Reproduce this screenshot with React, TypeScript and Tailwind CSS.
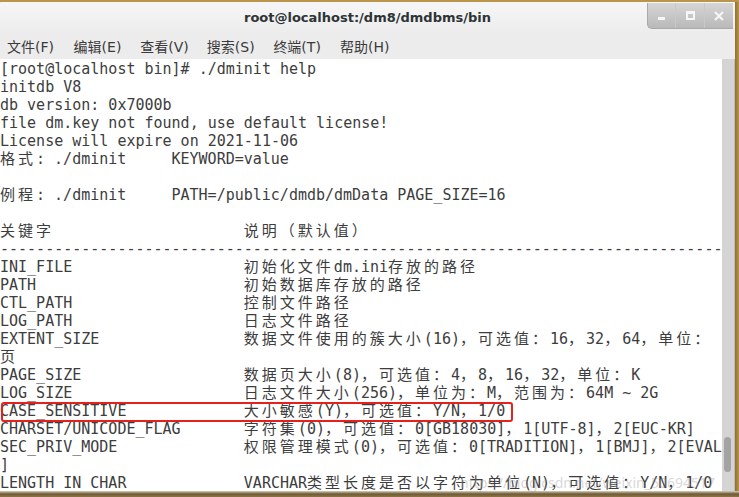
const KEY_COLS = 27;

const cellWidth = (s: string) => {
  let n = 0;
  for (const ch of s) n += ch.charCodeAt(0) > 0x7f ? 2 : 1;
  return n;
};

const row = (key: string, desc: string) =>
  key + ' '.repeat(Math.max(1, KEY_COLS - cellWidth(key))) + desc;

const lines: string[] = [
  '[root@localhost bin]# ./dminit help',
  'initdb V8',
  'db version: 0x7000b',
  'file dm.key not found, use default license!',
  'License will expire on 2021-11-06',
  '格式: ./dminit     KEYWORD=value',
  '',
  '例程: ./dminit     PATH=/public/dmdb/dmData PAGE_SIZE=16',
  '',
  row('关键字', '说明（默认值）'),
  '-'.repeat(80),
  row('INI_FILE', '初始化文件dm.ini存放的路径'),
  row('PATH', '初始数据库存放的路径'),
  row('CTL_PATH', '控制文件路径'),
  row('LOG_PATH', '日志文件路径'),
  row('EXTENT_SIZE', '数据文件使用的簇大小(16)，可选值：16，32，64，单位：'),
  '页',
  row('PAGE_SIZE', '数据页大小(8)，可选值：4，8，16，32，单位：K'),
  row('LOG_SIZE', '日志文件大小(256)，单位为：M，范围为：64M ~ 2G'),
  row('CASE_SENSITIVE', '大小敏感(Y)，可选值：Y/N，1/0'),
  row('CHARSET/UNICODE_FLAG', '字符集(0)，可选值：0[GB18030]，1[UTF-8]，2[EUC-KR]'),
  row('SEC_PRIV_MODE', '权限管理模式(0)，可选值：0[TRADITION]，1[BMJ]，2[EVAL'),
  ']',
  row('LENGTH_IN_CHAR', 'VARCHAR类型长度是否以字符为单位(N)，可选值：Y/N，1/0'),
];

const menus = ['文件(F)', '编辑(E)', '查看(V)', '搜索(S)', '终端(T)', '帮助(H)'];

function TermLine({ text }: { text: string }) {
  const runs = text.match(/[\x00-\x7f]+|[^\x00-\x7f]+/g) ?? [];
  return (
    <div className="h-[18px] leading-[18px] whitespace-pre">
      {runs.map((r, i) =>
        /^[\x00-\x7f]/.test(r) ? (
          <span key={i}>{r}</span>
        ) : (
          <span key={i} className="tracking-[3px]">
            {r}
          </span>
        )
      )}
    </div>
  );
}

function WindowButtons() {
  return (
    <div className="flex h-[26px] mt-[1px] rounded-bl-[5px] border-l border-b border-[#a9a9a9] bg-gradient-to-b from-[#d6d6d6] to-[#b9b9b9] overflow-hidden">
      <div className="w-[28px] flex items-center justify-center border-r border-[#c9c9c9]">
        <div className="w-[7px] h-[3px] mt-[6px] bg-[#f6f6f6]" />
      </div>
      <div className="w-[29px] flex items-center justify-center border-r border-[#c9c9c9]">
        <div className="w-[9px] h-[9px] border-2 border-t-[3px] border-[#f6f6f6]" />
      </div>
      <div className="w-[28px] flex items-center justify-center">
        <svg width="10" height="10" viewBox="0 0 10 10">
          <path d="M1 1 L9 9 M9 1 L1 9" stroke="#f6f6f6" strokeWidth="2.2" />
        </svg>
      </div>
    </div>
  );
}

export default function App() {
  return (
    <div className="w-[739px] h-[497px] overflow-hidden flex flex-col bg-[#a8873f]">
      <div className="h-[2px] bg-[#b9964c]" />
      <div className="flex flex-1 min-h-0">
        <div className="w-[735px] flex flex-col bg-[#ececec]">
          {/* title bar */}
          <div className="relative h-[33px] rounded-tl-[3px] bg-gradient-to-b from-[#f6f6f6] to-[#ececec]">
            <div className="absolute inset-x-0 top-[6px] text-center text-[13px] font-bold text-[#2e3436] font-['DejaVu_Sans',sans-serif]">
              root@localhost:/dm8/dmdbms/bin
            </div>
            <div className="absolute right-[2px] top-0">
              <WindowButtons />
            </div>
          </div>
          {/* menu bar */}
          <div className="h-[24px] flex items-center pl-[7px] text-[14px] text-[#3a3a3a] font-['DejaVu_Sans','Noto_Sans_CJK_SC',sans-serif]">
            {menus.map((m) => (
              <div key={m} className="w-[66.6px] shrink-0 leading-[20px] pb-[1px]">
                {m}
              </div>
            ))}
          </div>
          {/* terminal */}
          <div className="relative flex h-[432px]">
            <div className="w-[722px] pt-[1px] overflow-hidden bg-white text-[15px] text-[#3d3d3d] font-['DejaVu_Sans_Mono','Noto_Sans_CJK_SC',monospace]">
              {lines.map((l, i) => (
                <TermLine key={i} text={l} />
              ))}
            </div>
            <div className="w-[13px] bg-[#d4d4d4] border-r border-[#bcbcbc] relative">
              <div className="absolute left-[2px] top-[378px] w-[7px] h-[35px] rounded-full bg-[#a3a3a3]" />
            </div>
            <div className="absolute left-[1px] top-[343px] w-[512px] h-[20px] border-2 border-[#e8201c] rounded-[3px]" />
            <div className="absolute left-[460px] top-[413px] text-[14px] text-[#9a9a9a]/40 font-['Noto_Sans',sans-serif] whitespace-nowrap">
              https://blog.csdn.net/weixin_50694517
            </div>
          </div>
        </div>
        <div className="w-[4px] bg-gradient-to-r from-[#8c7038] to-[#b8954a]" />
      </div>
      <div className="h-[6px] bg-gradient-to-b from-[#d8d2c0] via-[#6e5a34] to-[#8e7444]" />
    </div>
  );
}
